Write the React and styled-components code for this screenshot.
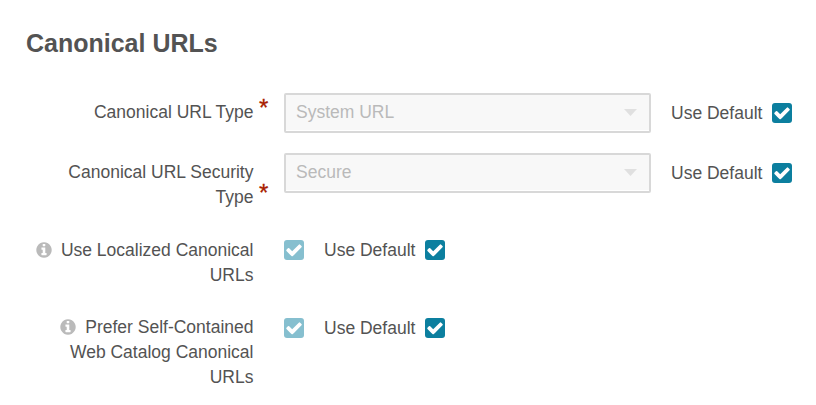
import React from 'react';
import styled, { createGlobalStyle } from 'styled-components';

const GlobalStyle = createGlobalStyle`
  *, *::before, *::after { box-sizing: border-box; }
  body {
    margin: 0;
    background: #fff;
    color: #535353;
    font: 17.5px/25px "Liberation Sans", Arial, sans-serif;
  }
`;

const Section = styled.section`
  padding: 28px 0 0 26px;
  width: 816px;
  height: 405px;
  overflow: hidden;
`;

const Title = styled.h2`
  margin: 0 0 35px;
  font-size: 25px;
  line-height: 30px;
  font-weight: 700;
  white-space: nowrap;
`;

const Row = styled.div`
  display: flex;
  align-items: flex-start;
  height: ${(p) => p.$height}px;
`;

const Label = styled.div`
  width: 228px;
  padding: 7px 0.5px 0 0;
  text-align: right;
  white-space: nowrap;
`;

const Line = styled.div`
  display: flex;
  align-items: center;
  justify-content: flex-end;
  height: 25px;
`;

const Mark = styled.span`
  width: 30px;
  padding: ${(p) => (p.$low ? 27 : 2)}px 0 0 5px;
  color: #a81c00;
  font-size: 24px;
  line-height: 25px;
  -webkit-text-stroke: 0.3px #a81c00;
`;

const InfoSvg = styled.svg`
  width: 18px;
  height: 18px;
  margin: 0 8px 1px 0;
  fill: #bababa;
`;

const Select = styled.div`
  display: flex;
  align-items: center;
  justify-content: space-between;
  width: 367px;
  height: 40px;
  padding: 0 12px 2px 10px;
  border: 2px solid #d8d8d8;
  border-radius: 2px;
  background: #f8f8f8;
  box-shadow: inset 0 -1px 0 #fff;
  color: #bababa;
`;

const Caret = styled.svg`
  width: 13px;
  height: 7px;
  fill: #e0e0e0;
`;

const Default = styled.label`
  display: flex;
  align-items: flex-start;
  height: 25px;
  margin: ${(p) => p.$top}px 0 0 20px;
  white-space: nowrap;
`;

const DefaultText = styled.span`
  width: 101px;
`;

const Box = styled.span`
  display: flex;
  align-items: center;
  justify-content: center;
  width: 20px;
  height: 20px;
  margin-top: 2px;
  padding-bottom: 1px;
  border-radius: 3px;
  background: ${(p) => (p.$disabled ? '#86bfcf' : '#0c7f9f')};
`;

const CheckSvg = styled.svg`
  width: 18px;
  height: 18px;
  fill: #fff;
`;

const BoxSlot = styled.div`
  padding-top: ${(p) => p.$top}px;
`;

const Check = ({ disabled }) => (
  <Box $disabled={disabled}>
    <CheckSvg viewBox="0 0 1792 1792">
      <path d="M1671 566q0 40-28 68l-724 724-136 136q-28 28-68 28t-68-28l-136-136-362-362q-28-28-28-68t28-68l136-136q28-28 68-28t68 28l294 295 656-657q28-28 68-28t68 28l136 136q28 28 28 68z" />
    </CheckSvg>
  </Box>
);

const Info = () => (
  <InfoSvg viewBox="0 0 1792 1792">
    <path d="M1152 1376v-160q0-14-9-23t-23-9h-96v-512q0-14-9-23t-23-9h-320q-14 0-23 9t-9 23v160q0 14 9 23t23 9h96v320h-96q-14 0-23 9t-9 23v160q0 14 9 23t23 9h448q14 0 23-9t9-23zm-128-896v-160q0-14-9-23t-23-9h-192q-14 0-23 9t-9 23v160q0 14 9 23t23 9h192q14 0 23-9t9-23zm640 416q0 209-103 385.5t-279.5 279.5-385.5 103-385.5-103-279.5-279.5-103-385.5 103-385.500 279.500-279.500 385.500-103 385.500 103 279.500 279.500 103 385.500z" />
  </InfoSvg>
);

const rows = [
  { lines: ['Canonical URL Type'], value: 'System URL', height: 60, top: 8 },
  { lines: ['Canonical URL Security', 'Type'], value: 'Secure', height: 78, top: 8 },
  { lines: ['Use Localized Canonical', 'URLs'], height: 77, top: 7 },
  { lines: ['Prefer Self-Contained', 'Web Catalog Canonical', 'URLs'], height: 85, top: 8 },
];

export default function App() {
  return (
    <>
      <GlobalStyle />
      <Section>
        <Title>Canonical URLs</Title>
        {rows.map((row) => (
          <Row key={row.lines[0]} $height={row.height}>
            <Label>
              {row.lines.map((line, i) => (
                <Line key={line}>
                  {!row.value && i === 0 && <Info />}
                  <span>{line}</span>
                </Line>
              ))}
            </Label>
            <Mark $low={row.lines.length > 1}>{row.value ? '*' : ''}</Mark>
            {row.value ? (
              <Select>
                <span>{row.value}</span>
                <Caret viewBox="0 0 13 7"><path d="M0 0h13L6.5 7z" /></Caret>
              </Select>
            ) : (
              <BoxSlot $top={row.top}><Check disabled /></BoxSlot>
            )}
            <Default $top={row.top}>
              <DefaultText>Use Default</DefaultText>
              <Check />
            </Default>
          </Row>
        ))}
      </Section>
    </>
  );
}
